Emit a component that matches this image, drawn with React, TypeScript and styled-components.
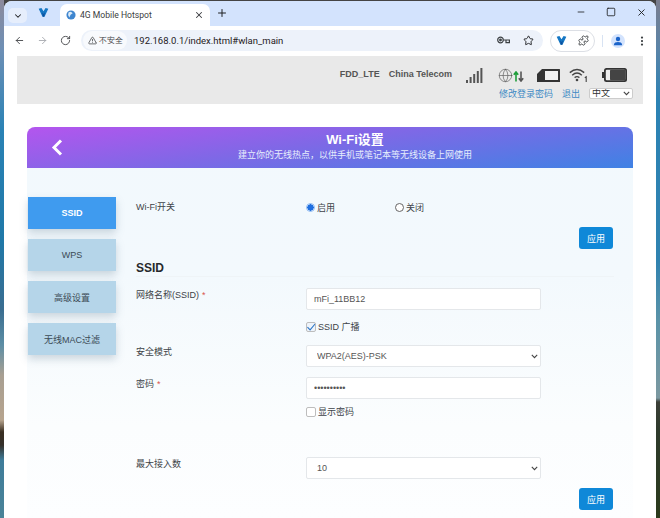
import React from 'react'
import styled, { createGlobalStyle, css } from 'styled-components'
import {
  ArrowLeft,
  ArrowRight,
  ChevronDown,
  EllipsisVertical,
  Globe,
  Minus,
  Plus,
  Puzzle,
  RotateCw,
  Square,
  Star,
  TriangleAlert,
  X,
} from 'lucide-react'

const GlobalStyle = createGlobalStyle`
    html, body {
        margin: 0;
        padding: 0;
        overflow: hidden;
    }
    body {
        font-family: "Liberation Sans", "Noto Sans CJK SC", sans-serif;
    }
`

const chevron = "url(\"data:image/svg+xml,%3Csvg xmlns='http://www.w3.org/2000/svg' width='7' height='5' viewBox='0 0 7 5' fill='none' stroke='%23444' stroke-width='1.1'%3E%3Cpath d='M0.8 0.8 L3.5 3.6 L6.2 0.8'/%3E%3C/svg%3E\")"
const tick = "url(\"data:image/svg+xml,%3Csvg xmlns='http://www.w3.org/2000/svg' width='10' height='10' viewBox='0 0 10 10' fill='none' stroke='%232f78c8' stroke-width='1.2'%3E%3Cpath d='M1 4.8 L3.8 7.8 L9 1.6'/%3E%3C/svg%3E\")"

const Desktop = styled.div`
    width: 660px;
    height: 518px;
    box-sizing: border-box;
    padding: 1px 4px 0 4px;
    overflow: hidden;
    background:
        linear-gradient(180deg, #8c8a9c 0, #6d8fb5 50px, #2a82b5 130px, #1f78a8 240px, #3a6d90 310px, #5d8ea5 345px, #a89f92 375px, #b7a48e 420px, #3a2f22 432px, #35302a 445px, #3f7c9a 460px, #4a8398 518px) left top / 4px 100% no-repeat,
        linear-gradient(180deg, #7a7d8e 0, #5a84a8 50px, #2c82b4 100px, #2f82b0 260px, #5a93a8 320px, #7c98a0 398px, #3c3f38 402px, #2e3a2c 430px, #2b3a1c 518px) right top / 4px 100% no-repeat,
        #444;
`

const Window = styled.div`
    height: 517px;
    display: flex;
    flex-direction: column;
    border-radius: 8px 8px 0 0;
    overflow: hidden;
    background: #fff;
`

const TabStrip = styled.div`
    height: 25px;
    flex: none;
    display: flex;
    align-items: flex-end;
    background: #d3e3fd;
    color: #1f2023;
`

const TabSearch = styled.div`
    width: 19px;
    height: 15px;
    margin: 0 0 3px 4px;
    border-radius: 5px;
    background: #e6eefc;
    display: flex;
    align-items: center;
    justify-content: center;
`

const PinnedLogo = styled.div`
    margin: 0 0 8px 11px;
    display: flex;
`

const Tab = styled.div`
    width: 150px;
    height: 22px;
    margin-left: 11px;
    padding: 0 6px 0 6px;
    box-sizing: border-box;
    display: flex;
    align-items: center;
    gap: 4px;
    border-radius: 7px 7px 0 0;
    background: #fff;
    font-family: Roboto, sans-serif;
    font-size: 8.6px;
    color: #3b3d40;
`

const TabTitle = styled.span`
    flex: 1;
`

const NewTab = styled.div`
    margin: 0 0 7px 6px;
    display: flex;
`

const WindowButtons = styled.div`
    margin: 0 9px 8px auto;
    display: flex;
    gap: 20px;
`

const Toolbar = styled.div`
    height: 29px;
    flex: none;
    display: flex;
    align-items: center;
    background: #fff;
    color: #3c4043;
`

const NavIcons = styled.div`
    width: 77px;
    padding-left: 10px;
    box-sizing: border-box;
    flex: none;
    display: flex;
    gap: 12px;
    color: #46484c;
`

const Omnibox = styled.div`
    width: 462px;
    height: 21px;
    flex: none;
    display: flex;
    align-items: center;
    border-radius: 11px;
    background: #edf2fa;
    font-family: Roboto, sans-serif;
    font-size: 9.5px;
    color: #1f2023;
`

const Security = styled.div`
    width: 44px;
    height: 19px;
    margin: 0 7px 0 2px;
    box-sizing: border-box;
    flex: none;
    display: flex;
    align-items: center;
    justify-content: center;
    gap: 2px;
    border-radius: 10px;
    background: #f8fafd;
    font-size: 8px;
    color: #3f4144;
`

const OmniIcons = styled.div`
    margin: 0 9px 0 auto;
    display: flex;
    align-items: center;
    gap: 13px;
`

const ExtensionPill = styled.div`
    width: 45px;
    height: 22px;
    margin-left: 7px;
    box-sizing: border-box;
    flex: none;
    display: flex;
    align-items: center;
    justify-content: center;
    gap: 11px;
    border: 1px solid #dcdfe5;
    border-radius: 11px;
`

const ToolbarDivider = styled.div`
    width: 1px;
    height: 12px;
    margin-left: 7px;
    background: #d8e3f3;
`

const Avatar = styled.div`
    width: 14px;
    height: 14px;
    margin-left: 8px;
    border-radius: 50%;
    background: #d3e3fd;
    display: flex;
    align-items: center;
    justify-content: center;
`

const MoreButton = styled.div`
    margin-left: 11px;
    display: flex;
`

const Page = styled.div`
    flex: 1;
    padding: 1px 13px 0 13px;
    background: #fff;
`

const StatusBar = styled.div`
    height: 48px;
    padding: 10px 10px 0 0;
    box-sizing: border-box;
    display: flex;
    flex-direction: column;
    align-items: flex-end;
    background: #e9e9e9;
`

const StatusTop = styled.div`
    height: 18px;
    margin-right: 6px;
    display: flex;
    align-items: center;
`

const Carrier = styled.span<{ $gap: number }>`
    margin: -2px ${p => p.$gap}px 0 0;
    font-size: 9px;
    font-weight: bold;
    color: #555;
`

const StatusIcon = styled.div<{ $gap: number }>`
    margin-right: ${p => p.$gap}px;
    display: flex;
`

const StatusLinks = styled.div`
    display: flex;
    align-items: center;
    margin-top: 3px;
`

const TopLink = styled.a`
    margin-right: 9px;
    font-size: 9px;
    color: #3f8ac4;
`

const selectBase = css`
    appearance: none;
    background-color: #fff;
    background-image: ${chevron};
    background-repeat: no-repeat;
    font-family: "Liberation Sans", "Noto Sans CJK SC", sans-serif;
`

const LangSelect = styled.select`
    ${selectBase}
    width: 44px;
    height: 11px;
    padding: 0 0 0 2px;
    font-size: 9px;
    line-height: 9px;
    color: #333;
    border: 1px solid #ccc;
    border-radius: 2px;
    background-position: right 2px center;
`

const Card = styled.div`
    margin: 23px 10px 0 10px;
    height: 391px;
    background: linear-gradient(180deg, #f2f9fd 0, #f3f9fd 150px, #fbfdfe 300px, #fdfeff 391px);
    border-radius: 8px 8px 0 0;
`

const CardHeader = styled.div`
    height: 41px;
    padding-left: 50px;
    position: relative;
    display: flex;
    flex-direction: column;
    align-items: center;
    border-radius: 8px 8px 0 0;
    background: linear-gradient(172deg, #b455ee 0%, #7f68e6 45%, #3f82e4 100%);
    color: #fff;
`

const BackIcon = styled.svg`
    position: absolute;
    left: 24px;
    top: 12px;
`

const CardTitle = styled.div`
    margin-top: 5px;
    font-size: 13px;
    line-height: 16px;
    font-weight: bold;
`

const CardSubtitle = styled.div`
    font-size: 9px;
    line-height: 14px;
    color: #e6eefc;
`

const CardBody = styled.div`
    display: flex;
    padding: 29px 0 0 1px;
`

const SideNav = styled.div`
    width: 88px;
    flex: none;
    display: flex;
    flex-direction: column;
    gap: 10px;
`

const NavItem = styled.div<{ $active?: boolean }>`
    height: 32px;
    display: flex;
    align-items: center;
    justify-content: center;
    font-size: 9px;
    font-weight: ${p => (p.$active ? 'bold' : 'normal')};
    color: ${p => (p.$active ? '#fff' : '#3b4a55')};
    background: ${p => (p.$active ? '#3f9bef' : '#b5d5e9')};
    box-shadow: 0 4px 8px rgba(90, 120, 140, 0.28);
`

const Content = styled.div`
    width: 478px;
    margin-left: 20px;
    flex: none;
    font-size: 9px;
    color: #3d4348;
`

const Row = styled.div<{ $height: number; $top?: number }>`
    height: ${p => p.$height}px;
    margin-top: ${p => p.$top ?? 0}px;
    display: flex;
`

const Label = styled.div<{ $offset?: number }>`
    width: 170px;
    flex: none;
    padding-top: ${p => p.$offset ?? 0}px;
    line-height: 13px;
`

const Required = styled.span`
    margin-left: 3px;
    color: #d9534f;
`

const RadioGroup = styled.div`
    display: flex;
    gap: 60px;
    padding-top: 6px;
`

const ChoiceLabel = styled.label`
    display: flex;
    align-items: center;
    gap: 2px;
    height: 10px;
    line-height: 13px;
`

const Radio = styled.input.attrs({ type: 'radio' })`
    appearance: none;
    width: 9px;
    height: 9px;
    margin: 0 0 2px;
    box-sizing: border-box;
    border: 1px solid #666;
    border-radius: 50%;
    background: #fff;
    &:checked {
        border: 1px solid #8ab8f2;
        background: radial-gradient(circle, #1f6fe0 0, #1f6fe0 3px, #fff 3.4px);
    }
`

const Check = styled.input.attrs({ type: 'checkbox' })`
    appearance: none;
    width: 10px;
    height: 10px;
    margin: 0;
    box-sizing: border-box;
    border: 1px solid #bdbdbd;
    border-radius: 2px;
    background: #fff center / 9px 9px no-repeat;
    &:checked {
        background-color: #eef4fb;
        background-image: ${tick};
    }
`

const ApplyRow = styled.div<{ $top: number }>`
    margin-top: ${p => p.$top}px;
    display: flex;
    justify-content: flex-end;
    padding-right: 1px;
`

const ApplyButton = styled.button`
    width: 34px;
    height: 22px;
    padding: 0;
    border: none;
    border-radius: 3px;
    background: #0f88d8;
    color: #fff;
    font-size: 9px;
    font-family: "Liberation Sans", "Noto Sans CJK SC", sans-serif;
`

const SectionTitle = styled.div`
    margin-top: 12px;
    height: 14px;
    padding-bottom: 1px;
    border-bottom: 1px solid #eff4f7;
    font-size: 12px;
    line-height: 14px;
    font-weight: bold;
    color: #26292c;
`

const TextInput = styled.input`
    width: 235px;
    height: 22px;
    box-sizing: border-box;
    padding: 0 7px;
    border: 1px solid #e4e7ea;
    border-radius: 2px;
    background: #fff;
    font-size: 9px;
    color: #555;
    font-family: "Liberation Sans", sans-serif;
`

const FormSelect = styled.select`
    ${selectBase}
    width: 235px;
    height: 22px;
    box-sizing: border-box;
    padding: 0 0 0 10px;
    border: 1px solid #e4e7ea;
    border-radius: 2px;
    font-size: 9px;
    color: #555;
    background-position: right 2px center;
`

const LogoV: React.FC<{ size: number }> = ({ size }) => (
    <svg width={size} height={size} viewBox="0 0 16 16">
        <path d="M1 2.5 L5 1.5 L8 6 L11 1.5 L15 2.5 L9.5 14 L6.5 14 Z" fill="#1577c4" />
        <path d="M6 7.5 L8 10 L10 7.5 L9 14 L7 14 Z" fill="#0d4f9c" />
    </svg>
)

const Favicon = () => (
    <svg width="10" height="10" viewBox="0 0 12 12">
        <circle cx="6" cy="6" r="5.5" fill="#3f86cf" />
        <path d="M3 3 Q6 1 8 4 Q5 5 4 9 Q1.5 6 3 3 Z" fill="#dcebf8" />
    </svg>
)

const KeyIcon = () => (
    <svg width="13" height="10" viewBox="0 0 13 10" fill="none" stroke="#3c4043" strokeWidth="1.2">
        <circle cx="3.5" cy="4" r="2.8" />
        <circle cx="3.5" cy="4" r="0.8" fill="#3c4043" />
        <path d="M6.5 4 H12.4 V6.6 H9 V4.4" />
    </svg>
)

const PersonIcon = () => (
    <svg width="10" height="10" viewBox="0 0 10 10" fill="#1a63c9">
        <circle cx="5" cy="3" r="2.2" />
        <path d="M0.8 9.2 C1 6.6 3 6 5 6 C7 6 9 6.6 9.2 9.2 Z" />
    </svg>
)

const SignalBars = () => (
    <svg width="17" height="15" viewBox="0 0 17 15" fill="#555">
        <rect x="0" y="12" width="2" height="3" />
        <rect x="3.6" y="9" width="2" height="6" />
        <rect x="7.2" y="6" width="2" height="9" />
        <rect x="10.8" y="3" width="2" height="12" />
        <rect x="14.4" y="0" width="2" height="15" />
    </svg>
)

const TrafficArrows = () => (
    <svg width="11" height="11" viewBox="0 0 11 11" fill="none" strokeWidth="1.6" style={{ marginTop: 3 }}>
        <path d="M3 10.5 V1.5 M0.8 3.8 L3 1 L5.2 3.8" stroke="#1f9d3a" />
        <path d="M8 0.5 V9.5 M5.8 7.2 L8 10 L10.2 7.2" stroke="#555" />
    </svg>
)

const SimIcon = () => (
    <svg width="23" height="13" viewBox="0 0 23 13">
        <path d="M5 0 H22.5 a0.5 0.5 0 0 1 .5 .5 V12.5 a0.5 0.5 0 0 1 -.5 .5 H0.5 a0.5 0.5 0 0 1 -.5 -.5 V5 Z" fill="#333" />
        <rect x="8" y="2" width="13" height="9" fill="#f0f0f0" />
    </svg>
)

const WifiIcon = () => (
    <svg width="19" height="14" viewBox="0 0 19 14" fill="none" stroke="#444" strokeWidth="1.4">
        <path d="M0.8 4.6 Q8 -1.5 15.2 4.6" />
        <path d="M3.2 7.2 Q8 3 12.8 7.2" />
        <path d="M5.6 9.6 Q8 7.6 10.4 9.6" />
        <circle cx="8" cy="12" r="1.3" fill="#444" stroke="none" />
        <path d="M15.8 9.8 L17.2 8.8 V14" strokeWidth="1.1" />
    </svg>
)

const BatteryIcon = () => (
    <svg width="25" height="14" viewBox="0 0 25 14">
        <rect x="0" y="4" width="2" height="6" fill="#333" />
        <rect x="2" y="0" width="23" height="14" rx="2.5" fill="#333" />
        <rect x="3.8" y="1.8" width="19.4" height="10.4" rx="1" fill="#eee" />
        <rect x="8" y="1.8" width="15.2" height="10.4" rx="1" fill="#444" />
    </svg>
)

const App: React.FC = () => {
    return (
        <>
            <GlobalStyle />
            <Desktop>
                <Window>
                    <TabStrip>
                        <TabSearch><ChevronDown size={10} strokeWidth={2.5} /></TabSearch>
                        <PinnedLogo><LogoV size={11} /></PinnedLogo>
                        <Tab>
                            <Favicon />
                            <TabTitle>4G Mobile Hotspot</TabTitle>
                            <X size={10} strokeWidth={2.5} />
                        </Tab>
                        <NewTab><Plus size={12} strokeWidth={2} /></NewTab>
                        <WindowButtons>
                            <Minus size={10} />
                            <Square size={10} />
                            <X size={11} />
                        </WindowButtons>
                    </TabStrip>
                    <Toolbar>
                        <NavIcons>
                            <ArrowLeft size={11} strokeWidth={2} />
                            <ArrowRight size={11} strokeWidth={2} color="#a8abb0" />
                            <RotateCw size={11} strokeWidth={2} />
                        </NavIcons>
                        <Omnibox>
                            <Security>
                                <TriangleAlert size={9} strokeWidth={2} />
                                <span>不安全</span>
                            </Security>
                            <span>192.168.0.1/index.html#wlan_main</span>
                            <OmniIcons>
                                <KeyIcon />
                                <Star size={11} strokeWidth={2} />
                            </OmniIcons>
                        </Omnibox>
                        <ExtensionPill>
                            <LogoV size={11} />
                            <Puzzle size={11} strokeWidth={2} />
                        </ExtensionPill>
                        <ToolbarDivider />
                        <Avatar><PersonIcon /></Avatar>
                        <MoreButton><EllipsisVertical size={12} strokeWidth={2.5} /></MoreButton>
                    </Toolbar>
                    <Page>
                        <StatusBar>
                            <StatusTop>
                                <Carrier $gap={9}>FDD_LTE</Carrier>
                                <Carrier $gap={14}>China Telecom</Carrier>
                                <StatusIcon $gap={15}><SignalBars /></StatusIcon>
                                <StatusIcon $gap={0}><Globe size={15} strokeWidth={1} color="#555" /></StatusIcon>
                                <StatusIcon $gap={13}><TrafficArrows /></StatusIcon>
                                <StatusIcon $gap={9}><SimIcon /></StatusIcon>
                                <StatusIcon $gap={14}><WifiIcon /></StatusIcon>
                                <StatusIcon $gap={0}><BatteryIcon /></StatusIcon>
                            </StatusTop>
                            <StatusLinks>
                                <TopLink>修改登录密码</TopLink>
                                <TopLink>退出</TopLink>
                                <LangSelect defaultValue="zh">
                                    <option value="zh">中文</option>
                                    <option value="en">English</option>
                                </LangSelect>
                            </StatusLinks>
                        </StatusBar>
                        <Card>
                            <CardHeader>
                                <BackIcon width="12" height="17" viewBox="0 0 12 17" fill="none" stroke="#fff" strokeWidth="3">
                                    <path d="M10 1.5 L3 8.5 L10 15.5" />
                                </BackIcon>
                                <CardTitle>Wi-Fi设置</CardTitle>
                                <CardSubtitle>建立你的无线热点，以供手机或笔记本等无线设备上网使用</CardSubtitle>
                            </CardHeader>
                            <CardBody>
                                <SideNav>
                                    <NavItem $active>SSID</NavItem>
                                    <NavItem>WPS</NavItem>
                                    <NavItem>高级设置</NavItem>
                                    <NavItem>无线MAC过滤</NavItem>
                                </SideNav>
                                <Content>
                                    <Row $height={16}>
                                        <Label $offset={4}>Wi-Fi开关</Label>
                                        <RadioGroup>
                                            <ChoiceLabel><Radio name="wifi" defaultChecked />启用</ChoiceLabel>
                                            <ChoiceLabel><Radio name="wifi" />关闭</ChoiceLabel>
                                        </RadioGroup>
                                    </Row>
                                    <ApplyRow $top={14}><ApplyButton>应用</ApplyButton></ApplyRow>
                                    <SectionTitle>SSID</SectionTitle>
                                    <Row $height={22} $top={11}>
                                        <Label $offset={1}>网络名称(SSID)<Required>*</Required></Label>
                                        <TextInput defaultValue="mFi_11BB12" />
                                    </Row>
                                    <Row $height={10} $top={12}>
                                        <Label />
                                        <ChoiceLabel><Check defaultChecked />SSID 广播</ChoiceLabel>
                                    </Row>
                                    <Row $height={22} $top={13}>
                                        <Label $offset={1}>安全模式</Label>
                                        <FormSelect defaultValue="wpa2">
                                            <option value="wpa2">WPA2(AES)-PSK</option>
                                        </FormSelect>
                                    </Row>
                                    <Row $height={22} $top={10}>
                                        <Label $offset={1}>密码<Required>*</Required></Label>
                                        <TextInput type="password" defaultValue="1234567890" />
                                    </Row>
                                    <Row $height={10} $top={8}>
                                        <Label />
                                        <ChoiceLabel><Check />显示密码</ChoiceLabel>
                                    </Row>
                                    <Row $height={22} $top={40}>
                                        <Label $offset={1}>最大接入数</Label>
                                        <FormSelect defaultValue="10">
                                            <option value="10">10</option>
                                        </FormSelect>
                                    </Row>
                                    <ApplyRow $top={9}><ApplyButton>应用</ApplyButton></ApplyRow>
                                </Content>
                            </CardBody>
                        </Card>
                    </Page>
                </Window>
            </Desktop>
        </>
    )
}

export default App
